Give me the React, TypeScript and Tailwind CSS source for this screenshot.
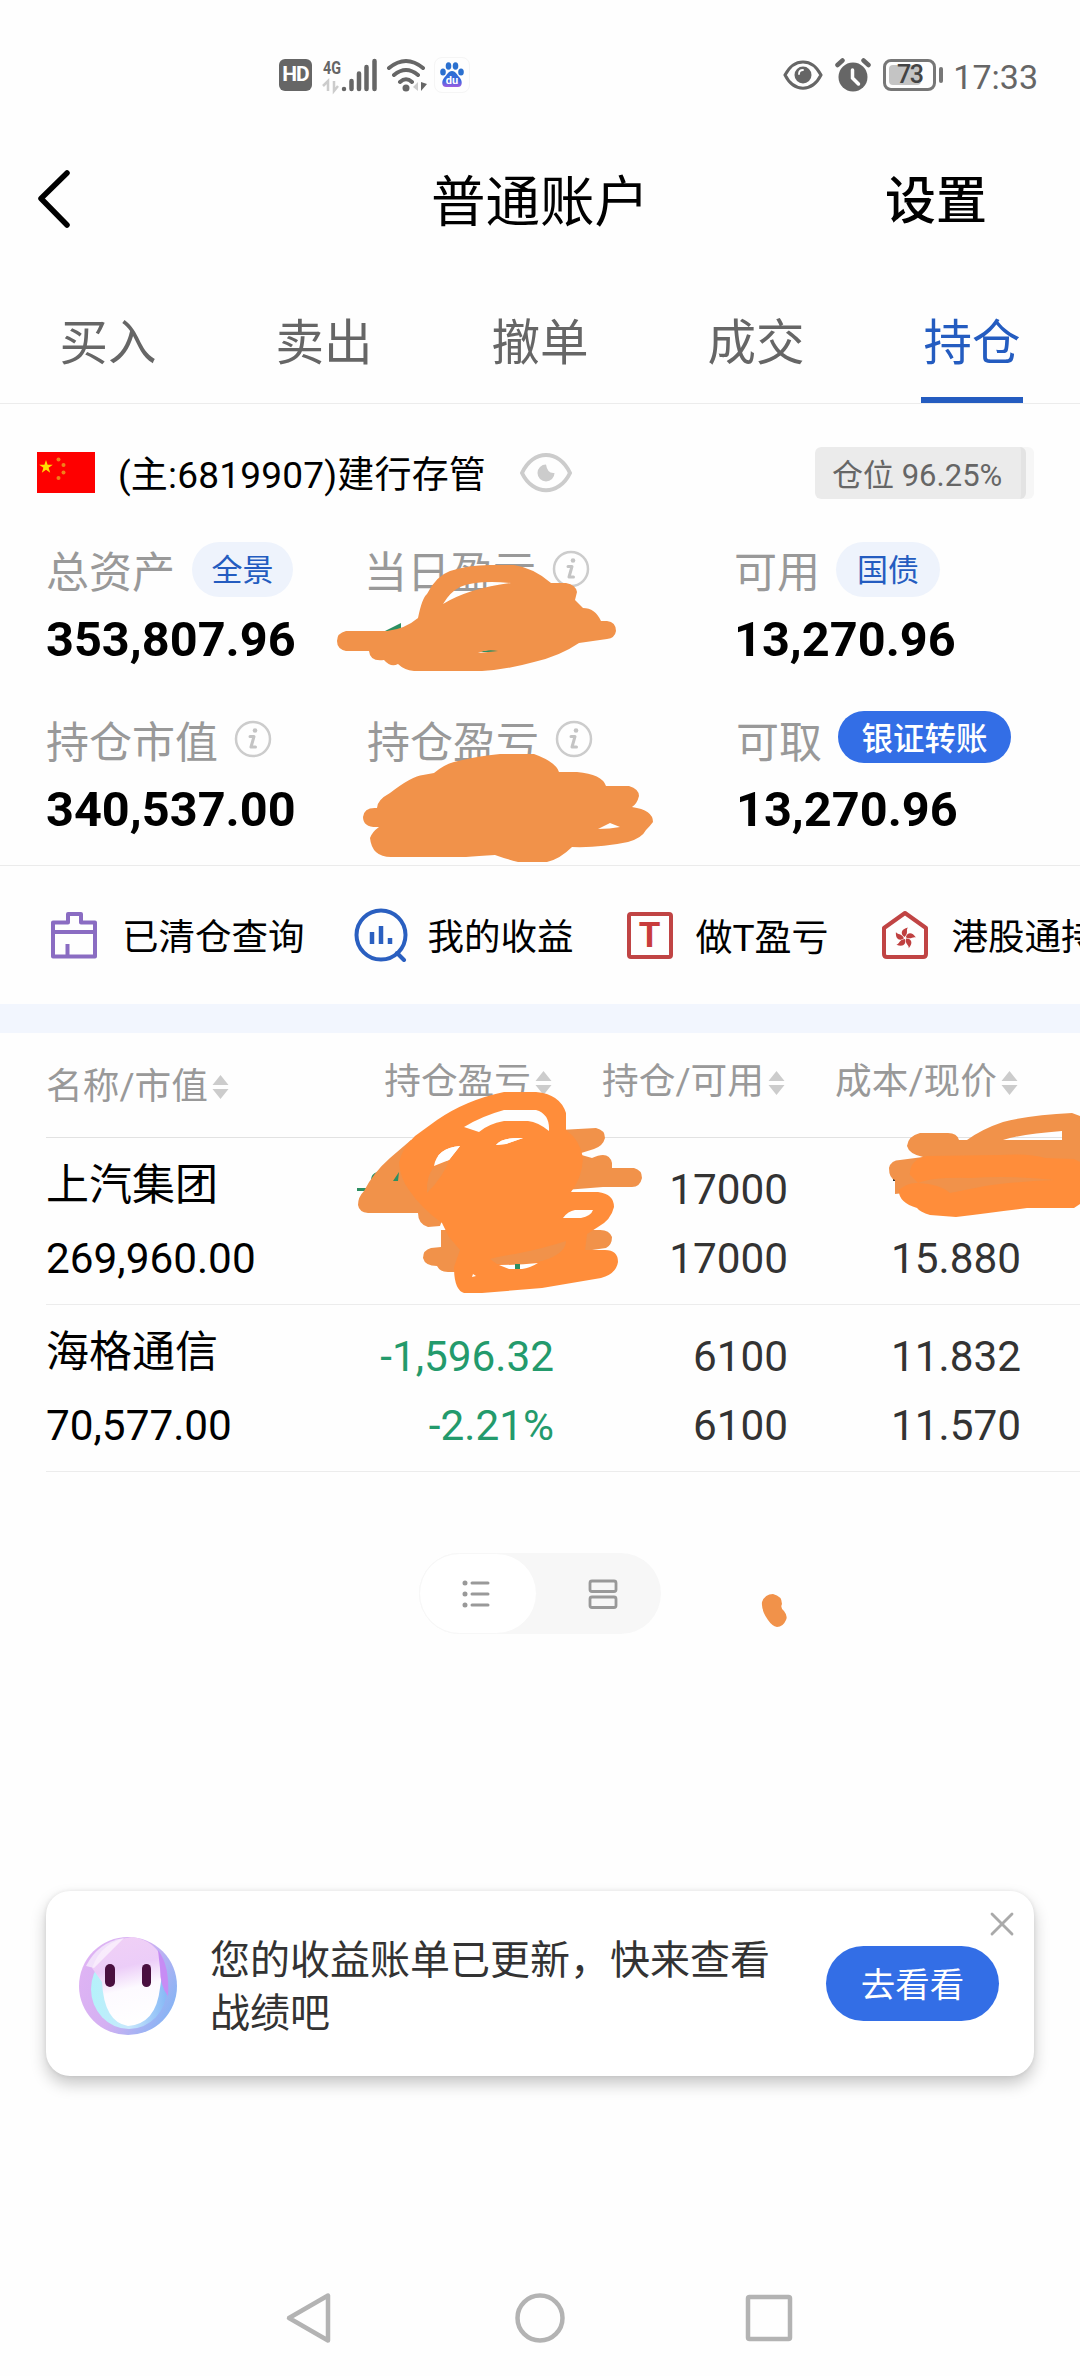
import { ReactNode } from 'react';
import { X } from 'lucide-react';

const TABS = ['买入', '卖出', '撤单', '成交', '持仓'];

const COLUMNS = [
    { label: '名称/市值', className: 'w-[270px] pt-[12px]' },
    { label: '持仓盈亏', className: 'w-[236px] justify-end pt-[3px]' },
    { label: '持仓/可用', className: 'w-[233px] justify-end pt-[3px]' },
    { label: '成本/现价', className: 'w-[233px] justify-end pt-[3px]' },
];

const HOLDINGS = [
    { name: '上汽集团', value: '269,960.00', profit: '', rate: '', held: '17000', usable: '17000', cost: '', price: '15.880' },
    { name: '海格通信', value: '70,577.00', profit: '-1,596.32', rate: '-2.21%', held: '6100', usable: '6100', cost: '11.832', price: '11.570' },
];

function StatusBar() {
    return (
        <div className="flex h-[150px] items-center justify-between pl-[279px] pr-[42px] text-[#666]">
            <div className="flex items-center">
                <span className="flex h-8 w-[33px] items-center justify-center rounded-md bg-[#666] text-[21px] font-bold tracking-tighter text-white">
                    HD
                </span>
                <svg className="ml-2.5 h-[34px] w-[56px] overflow-visible" viewBox="0 0 56 34" fill="none">
                    <text x="1" y="16" fontSize="19" fontWeight="700" fill="#666" textLength="18" lengthAdjust="spacingAndGlyphs">4G</text>
                    <path d="M6 33V23L1 28M12 23v10l4-5" stroke="#ccc" strokeWidth="2.5" />
                    <path d="M22 31v0M29.500 23v8M37 15.500v15.500M44.500 9v22M52.500 3v28" stroke="#666" strokeWidth="4.500" strokeLinecap="round" />
                </svg>
                <svg className="ml-2 h-[36px] w-[42px]" viewBox="0 0 42 36" fill="none">
                    <path d="M3 11q17-14 34 0M8 18q12-10 24 0M14 25q6-5.500 12 0" stroke="#666" strokeWidth="4" strokeLinecap="round" />
                    <circle cx="20" cy="31" r="3.500" fill="#666" />
                    <path d="M32 25v9l-5-4z" fill="#ccc" />
                    <path d="M35 25v9l6-7z" fill="#666" />
                </svg>
                <span className="ml-[6px] flex h-9 w-9 items-center justify-center rounded-lg border border-[#f5f5f5]">
                    <svg className="h-[26px] w-[24px]" viewBox="0 0 24 26">
                        <defs>
                            <linearGradient id="paw" x1="0" y1="0" x2="0" y2="1">
                                <stop offset="0" stopColor="#2b6fd0" />
                                <stop offset="0.6" stopColor="#3a6ae0" />
                                <stop offset="1" stopColor="#a05be0" />
                            </linearGradient>
                        </defs>
                        <g fill="#2b70cf">
                            <ellipse cx="3" cy="10" rx="2.8" ry="3.500" />
                            <ellipse cx="8.500" cy="4" rx="2.8" ry="3.800" />
                            <ellipse cx="15.500" cy="4" rx="2.8" ry="3.800" />
                            <ellipse cx="21" cy="10" rx="2.8" ry="3.500" />
                        </g>
                        <path d="M12 9c4 0 5 4 8 7 3 4 2 9-2 9H6c-4 0-5-5-2-9 3-3 4-7 8-7z" fill="url(#paw)" />
                        <text x="12" y="22" fontSize="11" fontWeight="700" fill="#fff" textAnchor="middle">du</text>
                    </svg>
                </span>
            </div>
            <div className="flex items-center">
                <svg className="h-[32px] w-[40px]" viewBox="0 0 40 32" fill="none">
                    <path d="M2 16C11-1.500 29-1.500 38 16 29 33.500 11 33.500 2 16z" stroke="#666" strokeWidth="3" />
                    <circle cx="20" cy="16" r="8.500" fill="#666" />
                    <path d="M16 15q0-4 4-4" stroke="#fff" strokeWidth="1.800" strokeLinecap="round" />
                </svg>
                <svg className="ml-3 h-[34px] w-[36px]" viewBox="0 0 36 34" fill="none">
                    <circle cx="18" cy="19" r="14.500" fill="#666" />
                    <path d="M2.500 7l5-4.500M33.500 7l-5-4.500" stroke="#666" strokeWidth="4.500" strokeLinecap="round" />
                    <path d="M17.500 12v8l6 6" stroke="#fff" strokeWidth="3.500" strokeLinecap="round" />
                </svg>
                <div className="ml-3 flex h-8 w-[53px] items-center rounded-lg border-[3px] border-[#777] p-[3px]">
                    <span className="flex h-5 w-[32px] items-center justify-center rounded-sm bg-[#c4c4c4] pl-[9px] text-[25px] font-medium tracking-tighter text-[#444]">
                        73
                    </span>
                </div>
                <span className="ml-[3px] h-4 w-1 rounded-full bg-[#777]" />
                <span className="ml-[10px] pt-[3px] text-[34px] leading-none">17:33</span>
            </div>
        </div>
    );
}

function Header() {
    return (
        <header className="grid h-[102px] grid-cols-3 items-center text-black">
            <svg className="mb-[5px] ml-[35px] h-[62px] w-[40px]" viewBox="0 0 40 62" fill="none">
                <path d="M32 5L6 30.500 32 57" stroke="#000" strokeWidth="5.500" strokeLinecap="round" strokeLinejoin="round" />
            </svg>
            <h1 className="pt-[3px] text-center text-[54.500px] leading-none">普通账户</h1>
            <span className="pr-[93px] pt-[1px] text-right text-[51px] font-medium leading-none">设置</span>
        </header>
    );
}

function Tabs() {
    return (
        <nav className="grid h-[152px] grid-cols-5 border-b border-[#ececec]">
            {TABS.map((tab) => (
                <div
                    key={tab}
                    className={`flex flex-col items-center justify-end text-[48.500px] leading-[60px] ${tab === '持仓' ? 'text-[#245cc0]' : 'text-[#666]'}`}
                >
                    <span>{tab}</span>
                    <span className={`mt-[23px] h-1.5 w-[102px] ${tab === '持仓' ? 'bg-[#245cc0]' : ''}`} />
                </div>
            ))}
        </nav>
    );
}

function AccountRow() {
    return (
        <div className="flex h-[137px] items-center pl-[37px] pr-[46px]">
            <svg className="h-[41px] w-[58px]" viewBox="0 0 58 41">
                <rect width="58" height="41" fill="#fe0000" />
                <path d="M9 8l1.600 4.800h5.200l-4.200 3 1.600 5L9 17.800l-4.200 3 1.600-5-4.200-3h5.200z" fill="#fd0" />
                <g fill="#f0801a">
                    <circle cx="21.500" cy="7.500" r="2" />
                    <circle cx="26.500" cy="13" r="2" />
                    <circle cx="26.500" cy="20.500" r="2" />
                    <circle cx="21.500" cy="26" r="2" />
                </g>
            </svg>
            <span className="ml-[23px] w-[366px] whitespace-nowrap pt-[6px] text-[37px] leading-none tracking-[0.2px] text-black">(主:6819907)建行存管</span>
            <svg className="ml-[36px] h-10 w-[52px]" viewBox="0 0 52 40" fill="none">
                <path d="M2 20C13-4 39-4 50 20 39 43 13 43 2 20z" stroke="#ccc" strokeWidth="4" />
                <path d="M26 11.500a8.500 8.500 0 1 0 8.500 8.500q-7 1-8.500-8.500z" fill="#ccc" />
            </svg>
            <div className="ml-auto h-[52px] w-[219px] overflow-hidden rounded-md bg-[#f6f6f6]">
                <div className="flex h-full w-[211px] items-center rounded-md border-r-[5px] border-[#e3e3e3] bg-[#ebebeb] pl-[17px] pt-[6px] text-[31px] leading-none text-[#666]">
                    仓位 96.25%
                </div>
            </div>
        </div>
    );
}

function InfoIcon() {
    return (
        <svg className="ml-[16px] h-[38px] w-[38px]" viewBox="0 0 38 38" fill="none">
            <circle cx="19" cy="19" r="17" stroke="#ccc" strokeWidth="2.500" />
            <circle cx="21" cy="10.500" r="2.300" fill="#c4c4c4" />
            <path d="M16 16.500h4l-3 10.500h4.500" stroke="#c4c4c4" strokeWidth="3" strokeLinecap="round" strokeLinejoin="round" />
        </svg>
    );
}

interface MetricProps {
    label: string;
    value?: string;
    className: string;
    children: ReactNode;
}

function Metric({ label, value, className, children }: MetricProps) {
    return (
        <div className={className}>
            <div className="flex h-14 items-center">
                <span className="pt-[9px] text-[43px] leading-none text-[#999]">{label}</span>
                {children}
            </div>
            <div className="mt-[13px] h-[60px] text-[48.700px] font-bold leading-[60px] text-black">{value}</div>
        </div>
    );
}

function Summary() {
    return (
        <div className="h-[325px] border-b border-[#ebebeb] pl-[46px]">
            <div className="flex h-[170px]">
                <Metric label="总资产" value="353,807.96" className="w-[318px]">
                    <span className="ml-[17px] flex h-[55px] w-[101px] items-center justify-center rounded-full bg-[#eef3fc] pt-[4px] text-[31px] text-[#245cc0]">全景</span>
                </Metric>
                <Metric label="当日盈亏" className="w-[370px]">
                    <InfoIcon />
                </Metric>
                <Metric label="可用" value="13,270.96" className="w-[340px]">
                    <span className="ml-[16px] flex h-[55px] w-[104px] items-center justify-center rounded-full bg-[#eef3fc] pt-[4px] text-[31px] text-[#245cc0]">国债</span>
                </Metric>
            </div>
            <div className="flex">
                <Metric label="持仓市值" value="340,537.00" className="w-[321px]">
                    <InfoIcon />
                </Metric>
                <Metric label="持仓盈亏" className="w-[369px]">
                    <InfoIcon />
                </Metric>
                <Metric label="可取" value="13,270.96" className="w-[340px]">
                    <span className="mb-1 ml-[16px] flex h-[52px] w-[173px] items-center justify-center rounded-full bg-[#336ee6] pt-[5px] text-[31.500px] font-medium text-white">
                        银证转账
                    </span>
                </Metric>
            </div>
        </div>
    );
}

function Shortcuts() {
    return (
        <div className="flex h-[138px] items-center overflow-hidden whitespace-nowrap pl-[51px] text-[36.500px] leading-none text-black">
            <svg className="h-[48px] w-[46px] shrink-0" viewBox="0 0 46 48" fill="none" stroke="#8a6cc2" strokeWidth="4" strokeLinejoin="round">
                <path d="M2 11.500h15V3h13v8.500h14V45.500H2zM2 21h42M16.500 33v12" />
            </svg>
            <span className="ml-[25px] pt-[7px]">已清仓查询</span>
            <svg className="ml-[49px] h-[54px] w-[54px] shrink-0" viewBox="0 0 54 54" fill="none" stroke="#2a5fc0" strokeWidth="4">
                <circle cx="27" cy="27" r="24.500" />
                <path d="M43 45l7 7" strokeLinecap="round" />
                <path d="M18 24v12M27 18v18M36 30v6" strokeWidth="4.500" />
            </svg>
            <span className="ml-[20px] pt-[7px]">我的收益</span>
            <span className="ml-[53px] flex h-[47px] w-[46px] shrink-0 items-center justify-center rounded-sm border-4 border-[#c04444] text-[35px] font-bold text-[#c83c3c]">
                T
            </span>
            <span className="ml-[23px] pt-[7px] text-[37px]">做T盈亏</span>
            <svg className="ml-[52px] h-[50px] w-[48px] shrink-0" viewBox="0 0 48 50" fill="none">
                <path d="M3 18L24 3l21 15v26q0 3-3 3H6q-3 0-3-3z" stroke="#c04444" strokeWidth="4" strokeLinejoin="round" />
                <g fill="#bf4040">
                    {[0, 72, 144, 216, 288].map((angle) => (
                        <path key={angle} d="M23.500 27C19 24 20 19 27 17.500 24.500 20 28 23 23.500 27z" transform={`rotate(${angle} 24 28)`} />
                    ))}
                </g>
            </svg>
            <span className="ml-[23px] pt-[7px]">港股通持仓</span>
        </div>
    );
}

function SortIcon() {
    return (
        <svg className="ml-[4px] h-6 w-[17px] shrink-0" viewBox="0 0 16 24" fill="#ccc">
            <path d="M8 0l8 10H0zM8 24l8-10H0z" />
        </svg>
    );
}

function HoldingsTable() {
    return (
        <div className="pl-[46px]">
            <div className="flex h-[105px] border-b border-[#e2e2e2] pb-[8px]">
                {COLUMNS.map((column) => (
                    <div key={column.label} className={`flex items-center text-[36.700px] leading-none text-[#999] ${column.className}`}>
                        {column.label}
                        <SortIcon />
                    </div>
                ))}
            </div>
            {HOLDINGS.map((row) => (
                <div key={row.name} className="flex h-[167px] border-b border-[#ececec] text-[42.300px] text-[#333]">
                    <div className="w-[270px] pt-[10px] leading-[74px] text-black">
                        <div className="text-[43px]">{row.name}</div>
                        <div>{row.value}</div>
                    </div>
                    <div className="w-[238px] pt-[17px] text-right leading-[69px] text-[#239a6c]">
                        <div>{row.profit}</div>
                        <div>{row.rate}</div>
                    </div>
                    <div className="w-[234px] pt-[17px] text-right leading-[69px]">
                        <div>{row.held}</div>
                        <div>{row.usable}</div>
                    </div>
                    <div className="w-[233px] pt-[17px] text-right leading-[69px]">
                        <div className="h-[69px]">{row.cost}</div>
                        <div>{row.price}</div>
                    </div>
                </div>
            ))}
        </div>
    );
}

function ViewToggle() {
    return (
        <div className="mx-auto mt-[81px] flex h-[81px] w-[242px] rounded-full bg-[#f7f7f7]">
            <div className="flex w-[118px] items-center justify-center rounded-full border border-[#f7f7f7] bg-white pr-1">
                <svg className="h-[30px] w-[30px]" viewBox="0 0 30 30" stroke="#999" strokeLinecap="round">
                    <path d="M4 4v0M4 15v0M4 26v0" strokeWidth="5" />
                    <path d="M11 4h16M11 15h16M11 26h16" strokeWidth="3" />
                </svg>
            </div>
            <div className="flex flex-1 items-center justify-center pl-2">
                <svg className="h-[30px] w-[30px]" viewBox="0 0 30 30" fill="none" stroke="#999" strokeWidth="2.800">
                    <rect x="2" y="2" width="26" height="10.500" rx="2" />
                    <rect x="2" y="18" width="26" height="10.500" rx="2" />
                </svg>
            </div>
        </div>
    );
}

function Avatar() {
    return (
        <svg className="mt-[5px] h-[100px] w-[100px] shrink-0" viewBox="0 0 100 100">
            <defs>
                <linearGradient id="ring" x1="0" y1="0.2" x2="1" y2="0.7">
                    <stop offset="0" stopColor="#e0b4f4" />
                    <stop offset="0.5" stopColor="#d4b0f2" />
                    <stop offset="1" stopColor="#84b4f4" />
                </linearGradient>
                <linearGradient id="face" x1="0.3" y1="0" x2="0.5" y2="1">
                    <stop offset="0" stopColor="#f0d0f6" />
                    <stop offset="0.35" stopColor="#eccdf8" />
                    <stop offset="0.6" stopColor="#fdfaff" />
                    <stop offset="1" stopColor="#ffffff" />
                </linearGradient>
                <linearGradient id="rim" x1="0" y1="0" x2="1" y2="0">
                    <stop offset="0" stopColor="#b4f2fa" />
                    <stop offset="0.5" stopColor="#c8e8fc" />
                    <stop offset="1" stopColor="#86b8f6" />
                </linearGradient>
            </defs>
            <circle cx="50" cy="50" r="49" fill="url(#ring)" />
            <ellipse cx="51" cy="53" rx="38" ry="40" fill="url(#rim)" />
            <path d="M14 32Q24 4 54 1q24 3 32 26l-4 25Q78 88 50 90 26 86 24 46z" fill="url(#face)" />
            <path d="M8 30Q20 6 46 2 34 14 16 32z" fill="#fff" opacity="0.6" />
            <path d="M80 14q12 16 10 46-8-10-8-28z" fill="#c78cf4" />
            <rect x="27" y="28" width="10" height="23" rx="5" fill="#4a1040" />
            <rect x="64" y="28" width="9" height="23" rx="4.500" fill="#4a1040" />
        </svg>
    );
}

function NoticeCard() {
    return (
        <div className="relative mx-[46px] mt-[257px] flex h-[185px] items-center rounded-3xl bg-white pl-8 shadow-[0_8px_16px_rgba(0,0,0,0.22),0_0_4px_rgba(0,0,0,0.08)]">
            <Avatar />
            <p className="ml-[32px] w-[565px] pt-[6px] text-[40px] leading-[53px] text-[#333]">您的收益账单已更新，快来查看战绩吧</p>
            <button className="ml-[51px] flex h-[75px] w-[173px] items-center justify-center rounded-full bg-[#336ee6] pt-[5px] text-[34.500px] text-white">
                去看看
            </button>
            <X className="absolute right-[12px] top-[13px] h-10 w-10 text-[#aaa]" strokeWidth={1.7} />
        </div>
    );
}

function NavBar() {
    return (
        <div className="mt-auto flex h-[116px] items-center justify-between pl-[284px] pr-[286px]">
            <svg className="h-[52px] w-[48px]" viewBox="0 0 48 52" fill="none" stroke="#b3b3b3" strokeWidth="4.500" strokeLinejoin="round">
                <path d="M44 3.500v45L5 26z" />
            </svg>
            <svg className="ml-1 h-[52px] w-[52px]" viewBox="0 0 52 52" fill="none" stroke="#b3b3b3" strokeWidth="4.500">
                <circle cx="26" cy="26" r="22.500" />
            </svg>
            <svg className="h-[50px] w-[50px]" viewBox="0 0 50 50" fill="none" stroke="#b3b3b3" strokeWidth="4.500">
                <rect x="4" y="4" width="42" height="42" rx="1.500" />
            </svg>
        </div>
    );
}

// Hand-drawn marks that cover the private figures
function Scribbles() {
    return (
        <svg className="pointer-events-none absolute left-0 top-0 h-[2376px] w-[1080px]" viewBox="0 0 1080 2376" fillRule="evenodd" strokeLinejoin="round">
            <g fill="#2c8f62">
                <path d="M385 631l16-8v10zM478 652h20v-4z" />
                <path d="M357 1188h10v3h-10zM371 1180q0-6 6-8l5 8z" />
                <path d="M893 1177h20v4h-20z" fill="#333" />
            </g>
            <g fill="#f1924a">
                <path d="M346 631H387Q405 629 418 618 422 598 427 594 436 576 450 571 468 565 490 565H514Q534 568 551 583H566Q576 585 577 592L575 600 583 608Q595 608 601 621H607Q616 622 616 631 615 638 607 639L579 643Q560 656 534 662 505 670 482 671H414Q404 670 398 664 391 668 384 660 370 662 369 651H346Q337 649 337 641T346 631zM443 604Q450 592 460 587 476 580 511 583 470 588 443 604zM478 653q8-4 20-2z" />
                <path d="M377 808Q377 800 390 793 412 776 423 775L434 773Q446 763 458 761 478 756 500 754H534Q556 762 559 772H577Q602 774 606 786H629Q639 789 639 796 637 804 632 807 653 810 653 822 650 826 646 830 642 838 628 842 600 848 572 847 560 859 547 862H518Q506 859 495 855 478 856 466 857H393Q372 858 370 838 372 832 379 827 363 828 363 817 364 807 377 808zM598 829l12-6 10 4q-10 2-22 2z" />
                <path d="M358 1205Q358 1197 364 1191 373 1173 390 1158L411 1140 460 1170 440 1226 428 1227Q418 1224 418 1213H368Q359 1212 358 1205z" />
                <path d="M560 1130L596 1128Q605 1130 605 1138 603 1146 594 1149L578 1154 592 1158Q609 1150 612 1163V1168H634Q642 1170 642 1178 640 1187 632 1187H603L565 1190z" />
                <path d="M450 1230H441V1247L431 1248Q423 1250 423 1258 425 1266 437 1266 440 1272 448 1272H480L560 1260 585 1251 606 1248Q612 1245 612 1237 609 1229 598 1230z" />
                <path d="M907 1146Q908 1136 920 1133H948Q957 1133 959 1140H967Q982 1129 1003 1122 1030 1115 1072 1113L1080 1116V1175L895 1194V1180Q889 1178 889 1168 891 1160 900 1160L923 1157Q909 1154 907 1146zM1003 1140H1062V1131Q1022 1134 1003 1140z" />
                <path d="M762 1602Q765 1594 773 1594 782 1596 782 1604 780 1608 784 1611 788 1616 786 1620 783 1627 777 1627 772 1626 768 1620 761 1610 762 1602z" />
            </g>
            <g fill="#ff8d3a">
                <path d="M399 1163Q402 1148 415 1136L437 1120Q466 1100 504 1092H536Q560 1094 566 1113V1130Q580 1140 583 1158 582 1178 571 1192H598Q614 1194 614 1207 611 1220 598 1227L587 1234 585 1250H605Q618 1250 618 1262 616 1274 601 1278L542 1288 482 1293H464Q454 1290 454 1267L460 1250 449 1237 442 1223Q421 1208 409 1190 400 1178 399 1163zM464 1127L479 1132Q488 1124 504 1121H528Q538 1122 549 1131 550 1114 536 1110H504Q482 1116 464 1127zM434 1166Q437 1148 460 1146L449 1160zM496 1145Q502 1137 523 1138L506 1144zM563 1218Q568 1211 575 1210H593Q591 1216 581 1218zM473 1274l3 2-4 1z" />
                <path d="M910 1175Q909 1160 927 1156L1000 1155Q1030 1153 1045 1158L1074 1159 1080 1162V1204L1074 1208H1027Q995 1212 956 1217L930 1215Q920 1212 917 1208 898 1202 899 1190 908 1182 918 1183z" />
            </g>
            <g fill="#f1924a">
                <path d="M434 1167L449 1160Q444 1176 427 1193 426 1176 434 1167z" />
                <path d="M490 1259Q500 1256 515 1254 545 1248 566 1241 566 1252 548 1259 530 1266 497 1264z" />
                <path d="M918 1183Q932 1177 970 1178 1010 1175 1055 1180 1010 1182 985 1186 965 1190 950 1193 940 1184 918 1183z" />
            </g>
            <path d="M434 1166Q437 1148 460 1146L449 1160zM496 1145Q502 1137 523 1138L506 1144zM499 1265Q520 1265 538 1263 530 1268 522 1269H509z" fill="#fff" />
            <path d="M393 1181l6-9-1 9zM515 1264h5v5h-5z" fill="#2c8f62" />
        </svg>
    );
}

export default function App() {
    return (
        <div className="relative flex h-[2376px] w-[1080px] flex-col overflow-hidden bg-[#fefefe] font-['Roboto','Noto_Sans_CJK_SC',sans-serif]">
            <StatusBar />
            <Header />
            <Tabs />
            <AccountRow />
            <Summary />
            <Shortcuts />
            <div className="h-[29px] bg-[#f2f6fe]" />
            <HoldingsTable />
            <ViewToggle />
            <NoticeCard />
            <NavBar />
            <Scribbles />
        </div>
    );
}
